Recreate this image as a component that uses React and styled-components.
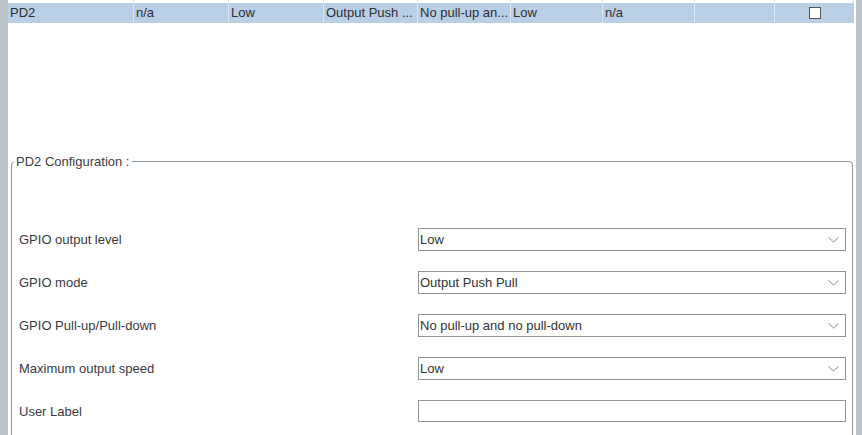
import styled, { createGlobalStyle } from "styled-components";

const GlobalStyle = createGlobalStyle`
  html, body {
    margin: 0;
    padding: 0;
    height: 100%;
    overflow: hidden;
    background: #bac3ca;
  }
  body {
    font-family: "Liberation Sans", Arial, sans-serif;
    font-size: 13px;
    color: #333;
  }
`;

const Page = styled.div`
  display: flex;
  height: 435px;
  padding: 0 6px 0 8px;
`;

const Main = styled.div`
  flex: 1;
  background: #fff;
  display: flex;
  flex-direction: column;
  overflow: hidden;
`;

const HeaderStub = styled.div`
  display: grid;
  grid-template-columns: 126px 95px 95px 94px 93px 92px 92px 80px 79px;
  height: 3px;
  margin-right: 2px;
  flex: none;
`;

const StubCell = styled.div`
  border-right: 1px solid #dfe4e8;
`;

const Row = styled.div`
  display: grid;
  grid-template-columns: 126px 95px 95px 94px 93px 92px 92px 80px 79px;
  height: 20px;
  margin-right: 2px;
  background: #b9cfe5;
  flex: none;
`;

const Cell = styled.div`
  display: flex;
  align-items: center;
  justify-content: ${(p) => (p.$center ? "center" : "flex-start")};
  padding-left: ${(p) => (p.$center ? "0" : "2px")};
  border-right: 1px solid #dbe5ef;
  line-height: 20px;
  white-space: nowrap;
  overflow: hidden;
  color: #2e2e33;
  &:last-child {
    border-right: none;
  }
`;

const CheckBox = styled.span`
  width: 10px;
  height: 10px;
  background: #fff;
  border: 1px solid #555;
`;

const Spacer = styled.div`
  height: 131px;
  flex: none;
`;

const Group = styled.fieldset`
  margin: 0 3px 0 3px;
  padding: 0 6px 60px 7px;
  border: 1px solid #8f959b;
  border-radius: 4px;
  min-width: 0;
  flex: none;
`;

const Legend = styled.legend`
  padding: 0 3px 0 2px;
  margin-left: -5px;
  color: #3c3c44;
  font-size: 13px;
  line-height: 15px;
`;

const Form = styled.div`
  display: grid;
  grid-template-columns: 399px 1fr;
  row-gap: 20px;
  padding-top: 59px;
`;

const Label = styled.div`
  display: flex;
  align-items: center;
  height: 23px;
  color: #3a3a42;
`;

const Select = styled.div`
  display: flex;
  align-items: center;
  justify-content: space-between;
  height: 21px;
  border: 1px solid #8d949a;
  padding: 0 6px 0 1px;
  background: #fff;
  color: #333;
`;

const TextBox = styled.div`
  height: 20px;
  border: 1px solid #8d949a;
  background: #fff;
`;

const Chevron = () => (
  <svg width="11" height="6" viewBox="0 0 11 6">
    <path d="M0.5 0.5 L5.5 5 L10.5 0.5" fill="none" stroke="#8a8a8a" strokeWidth="1" />
  </svg>
);

const cells = ["PD2", "n/a", "Low", "Output Push ...", "No pull-up an...", "Low", "n/a", ""];

const fields = [
  { label: "GPIO output level", value: "Low" },
  { label: "GPIO mode", value: "Output Push Pull" },
  { label: "GPIO Pull-up/Pull-down", value: "No pull-up and no pull-down" },
  { label: "Maximum output speed", value: "Low" },
];

export default function App() {
  return (
    <>
      <GlobalStyle />
      <Page>
        <Main>
          <HeaderStub>
            {cells.map((_, i) => (
              <StubCell key={i} />
            ))}
            <StubCell />
          </HeaderStub>
          <Row>
            {cells.map((c, i) => (
              <Cell key={i}>{c}</Cell>
            ))}
            <Cell $center>
              <CheckBox />
            </Cell>
          </Row>
          <Spacer />
          <Group>
            <Legend>PD2 Configuration :</Legend>
            <Form>
              {fields.map((f) => [
                <Label key={f.label}>{f.label}</Label>,
                <Select key={f.label + "-v"}>
                  <span>{f.value}</span>
                  <Chevron />
                </Select>,
              ])}
              <Label>User Label</Label>
              <TextBox />
            </Form>
          </Group>
        </Main>
      </Page>
    </>
  );
}
